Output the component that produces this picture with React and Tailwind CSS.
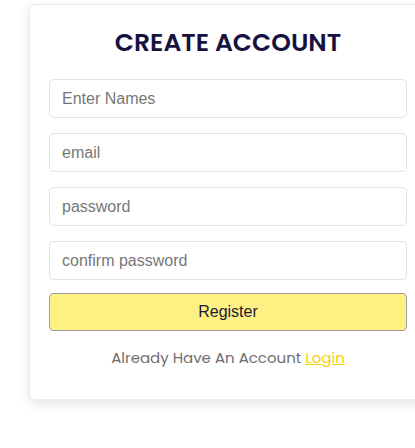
import React from 'react';

export default function App() {
  const fields = [
    { type: 'text', placeholder: 'Enter Names' },
    { type: 'email', placeholder: 'email' },
    { type: 'password', placeholder: 'password' },
    { type: 'password', placeholder: 'confirm password' },
  ];

  return (
    <div className="w-full h-[448px] bg-white overflow-hidden pt-[4px] pl-[29px]">
      <div className="w-[398px] bg-white rounded-[5px] border border-[#ececec] shadow-[0_4px_12px_rgba(0,0,0,0.1)] px-[19px] pt-[21px] pb-[30px]">
        <h1 className="text-center text-[25px] leading-[34px] font-semibold text-[#16123f] font-['Poppins','Inter',sans-serif]">
          CREATE ACCOUNT
        </h1>

        <form className="mt-[19px] flex flex-col gap-[15px]" onSubmit={e => e.preventDefault()}>
          {fields.map(f => (
            <input
              key={f.placeholder}
              type={f.type}
              placeholder={f.placeholder}
              className="w-full h-[39px] px-[12px] rounded-[5px] border border-[#e2e2e2] bg-white text-[16px] font-['Liberation_Sans',Arial,sans-serif] text-[#333] placeholder:text-[#777] outline-none"
            />
          ))}
          <button
            type="submit"
            className="-mt-[2px] w-full h-[38px] rounded-[4px] border border-[#a0a0a0] bg-[#fff084] text-[16px] text-[#1d1a33] font-['Liberation_Sans',Arial,sans-serif]"
          >
            Register
          </button>
        </form>

        <p className="mt-[16px] text-center text-[15px] leading-[22px] text-[#6e6e6e] font-['Poppins','Open_Sans',sans-serif]">
          Already Have An Account <a href="#" className="text-[#f5d10a] underline">Login</a>
        </p>
      </div>
    </div>
  );
}
